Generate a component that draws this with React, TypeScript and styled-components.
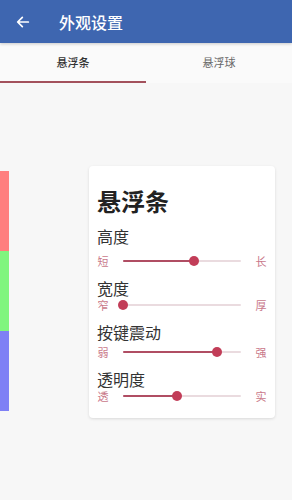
import React from "react";
import styled, { createGlobalStyle } from "styled-components";

const GlobalStyle = createGlobalStyle`
  html, body {
    margin: 0;
    padding: 0;
    background: #f7f7f7;
    font-family: "Noto Sans CJK SC", "Noto Sans", sans-serif;
  }
  #root {
    height: 500px;
  }
`;

const sliders = [
  { label: "高度", min: "短", max: "长", value: 0.6, top: 8 },
  { label: "宽度", min: "窄", max: "厚", value: 0, top: 0 },
  { label: "按键震动", min: "弱", max: "强", value: 0.8, top: 3 },
  { label: "透明度", min: "透", max: "实", value: 0.46, top: 0 },
];

export default function App() {
  return (
    <Page>
      <GlobalStyle />
      <Header>
        <BackButton>
          <svg width="16" height="16" viewBox="0 0 24 24" fill="none">
            <path
              d="M20 12H5M11 5l-7 7 7 7"
              stroke="#fff"
              strokeWidth="2.6"
              strokeLinecap="round"
              strokeLinejoin="round"
            />
          </svg>
        </BackButton>
        <Title>外观设置</Title>
      </Header>
      <Tabs>
        <Tab $active>悬浮条</Tab>
        <Tab>悬浮球</Tab>
      </Tabs>
      <Body>
        <ColorStrip>
          <ColorBlock $color="#ff7f7f" />
          <ColorBlock $color="#80f57f" />
          <ColorBlock $color="#7f80f5" />
        </ColorStrip>
        <Card>
          <CardTitle>悬浮条</CardTitle>
          {sliders.map((s) => (
            <Group key={s.label}>
              <Label>{s.label}</Label>
              <SliderRow $top={s.top}>
                <EndLabel>{s.min}</EndLabel>
                <Track>
                  <Fill style={{ width: `${s.value * 100}%` }} />
                  <Thumb style={{ left: `${s.value * 100}%` }} />
                </Track>
                <EndLabel>{s.max}</EndLabel>
              </SliderRow>
            </Group>
          ))}
        </Card>
      </Body>
    </Page>
  );
}

const Page = styled.div`
  height: 500px;
  display: flex;
  flex-direction: column;
  background: #f7f7f7;
`;

const Header = styled.div`
  height: 43px;
  background: #3e66b0;
  display: flex;
  align-items: center;
  padding-left: 15px;
  box-shadow: 0 1px 3px rgba(0, 0, 0, 0.2);
  position: relative;
  z-index: 1;
`;

const BackButton = styled.div`
  width: 16px;
  height: 16px;
  display: flex;
`;

const Title = styled.div`
  margin-left: 28px;
  color: #fff;
  font-size: 16px;
  font-weight: 500;
`;

const Tabs = styled.div`
  height: 40px;
  display: flex;
  background: #fafafa;
`;

const Tab = styled.div<{ $active?: boolean }>`
  flex: 1;
  display: flex;
  align-items: center;
  justify-content: center;
  font-size: 11px;
  color: ${(p) => (p.$active ? "#333" : "#666")};
  font-weight: ${(p) => (p.$active ? 500 : 400)};
  border-bottom: 2px solid ${(p) => (p.$active ? "#a3515c" : "transparent")};
`;

const Body = styled.div`
  flex: 1;
  display: flex;
  align-items: center;
`;

const ColorStrip = styled.div`
  width: 9px;
  display: flex;
  flex-direction: column;
  margin-top: -2px;
`;

const ColorBlock = styled.div<{ $color: string }>`
  height: 80px;
  background: ${(p) => p.$color};
`;

const Card = styled.div`
  margin-left: 80px;
  width: 186px;
  box-sizing: border-box;
  padding: 20px 8px 15px 8px;
  background: #fff;
  border-radius: 4px;
  box-shadow: 0 1px 3px rgba(0, 0, 0, 0.12);
`;

const CardTitle = styled.div`
  font-size: 24px;
  line-height: 30px;
  font-weight: 700;
  color: #222;
`;

const Group = styled.div`
  margin-top: 10px;
`;

const Label = styled.div`
  font-size: 16px;
  line-height: 20px;
  height: 20px;
  color: #333;
`;

const SliderRow = styled.div<{ $top: number }>`
  margin-top: ${(p) => p.$top}px;
  height: 14px;
  display: flex;
  align-items: center;
`;

const EndLabel = styled.div`
  width: 12px;
  font-size: 11px;
  line-height: 14px;
  height: 14px;
  color: #c9788a;
  text-align: center;
  flex-shrink: 0;
`;

const Track = styled.div`
  position: relative;
  flex: 1;
  height: 2px;
  margin: 0 14px;
  background: #eadbdf;
  border-radius: 1px;
`;

const Fill = styled.div`
  height: 100%;
  background: #b04d63;
  border-radius: 1px;
`;

const Thumb = styled.div`
  position: absolute;
  top: 50%;
  width: 10px;
  height: 10px;
  border-radius: 50%;
  background: #c23d58;
  transform: translate(-50%, -50%);
`;
